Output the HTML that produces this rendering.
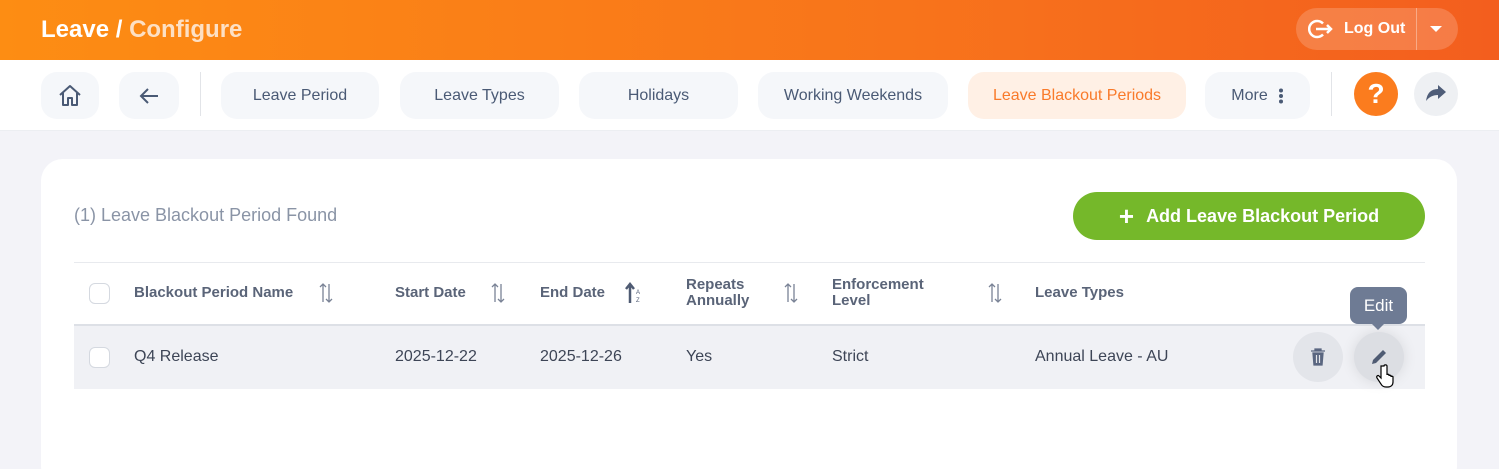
<!DOCTYPE html>
<html><head><style>
*{box-sizing:border-box;margin:0;padding:0}
html,body{width:1499px;height:469px;overflow:hidden}
body{background:#f3f3f8;font-family:"Liberation Sans",sans-serif;position:relative;color:#4a5568}
.hdr{position:absolute;left:0;top:0;width:1499px;height:60px;background:linear-gradient(90deg,#fd8d13,#f8741b 60%,#f35e1e)}
.title{position:absolute;left:41px;top:16px;font-size:24px;font-weight:bold;color:#fff}
.title span{color:#fde0c4}
.logout{position:absolute;left:1296px;top:8px;width:162px;height:42px;border-radius:21px;background:rgba(255,255,255,.18);color:#fff;font-weight:bold;font-size:16px}
.nav{position:absolute;left:0;top:60px;width:1499px;height:71px;background:#fff;border-bottom:1px solid #eceef2}
.pill{position:absolute;top:12px;height:47px;border-radius:16px;background:#f5f7fa;color:#4a5a75;font-size:16px;display:flex;align-items:center;justify-content:center}
.vd{position:absolute;top:12px;width:1px;height:44px;background:#e2e4e8}
.card{position:absolute;left:41px;top:159px;width:1416px;height:330px;background:#fff;border-radius:22px}
.found{position:absolute;left:74px;top:205px;font-size:18px;color:#8a94a6}
.add{position:absolute;left:1073px;top:192px;width:352px;height:48px;border-radius:24px;background:#75b82a;color:#fff;font-weight:bold;font-size:18px;display:flex;align-items:center;justify-content:center}
.th{position:absolute;font-size:15px;font-weight:bold;color:#5a6478;line-height:16px}
.td{position:absolute;top:348px;font-size:16px;color:#3d4556}
.cb{position:absolute;left:89px;width:21px;height:21px;border:1.5px solid #d5d9e0;border-radius:6px;background:#fff}
.sort{position:absolute;top:282px}
</style></head><body>
<div class="hdr"><div class="title">Leave / <span>Configure</span></div>
<div class="logout">
<svg style="position:absolute;left:12px;top:10px" width="26" height="22" viewBox="0 0 26 22"><path d="M15 5.5A8 8 0 1 0 15 16.5" fill="none" stroke="#fff" stroke-width="2.5"/><path d="M8 11h15M19 7l4 4-4 4" fill="none" stroke="#fff" stroke-width="2.5"/></svg>
<span style="position:absolute;left:48px;top:12px">Log Out</span>
<div style="position:absolute;left:120px;top:0;width:1px;height:42px;background:rgba(255,255,255,.35)"></div>
<div style="position:absolute;left:134px;top:18px;border-left:6px solid transparent;border-right:6px solid transparent;border-top:6px solid #fff"></div>
</div></div>
<div class="nav">
<div class="pill" style="left:41px;width:58px"><svg width="26" height="24" viewBox="0 0 26 24"><path d="M3 11L13 2l10 9M6 9v12h5v-7h4v7h5V9" fill="none" stroke="#4a5a75" stroke-width="2" stroke-linejoin="round"/></svg></div>
<div class="pill" style="left:119px;width:60px"><svg width="22" height="18" viewBox="0 0 22 18"><path d="M20 9H3M10 2L3 9l7 7" fill="none" stroke="#4a5a75" stroke-width="2"/></svg></div>
<div class="vd" style="left:200px"></div>
<div class="pill" style="left:221px;width:158px">Leave Period</div>
<div class="pill" style="left:400px;width:159px">Leave Types</div>
<div class="pill" style="left:579px;width:159px">Holidays</div>
<div class="pill" style="left:758px;width:190px">Working Weekends</div>
<div class="pill" style="left:968px;width:218px;background:#fff0e5;color:#f97a2a">Leave Blackout Periods</div>
<div class="pill" style="left:1205px;width:105px">More <svg style="margin-left:10px" width="6" height="16" viewBox="0 0 6 16"><circle cx="3" cy="2.5" r="2" fill="#4a5a75"/><circle cx="3" cy="8" r="2" fill="#4a5a75"/><circle cx="3" cy="13.5" r="2" fill="#4a5a75"/></svg></div>
<div class="vd" style="left:1331px"></div>
<div style="position:absolute;left:1354px;top:12px;width:44px;height:44px;border-radius:50%;background:#fb7c1e;color:#fff;font-weight:bold;font-size:28px;text-align:center;line-height:44px">?</div>
<div style="position:absolute;left:1414px;top:12px;width:44px;height:44px;border-radius:50%;background:#eef0f3"><svg style="position:absolute;left:10px;top:11px" width="24" height="22" viewBox="0 0 24 22"><path d="M22 9L14 2v4C7 6 3 10 2 18c3-4 7-6 12-6v4z" fill="#4f5d78"/></svg></div>
</div>
<div class="card"></div>
<div class="found">(1) Leave Blackout Period Found</div>
<div class="add"><span style="font-size:26px;margin-right:12px;font-weight:bold">+</span>Add Leave Blackout Period</div>
<div style="position:absolute;left:74px;top:262px;width:1351px;height:1px;background:#e8eaee"></div>
<div class="cb" style="top:283px"></div>
<div class="th" style="left:134px;top:285px">Blackout Period Name</div>
<svg class="sort" style="left:318px" width="16" height="22" viewBox="0 0 16 22"><path d="M5 20V2M2 5l3-3 3 3M11 2v18M8 17l3 3 3-3" fill="none" stroke="#7a8396" stroke-width="1.3"/></svg>
<div class="th" style="left:395px;top:285px">Start Date</div>
<svg class="sort" style="left:490px" width="16" height="22" viewBox="0 0 16 22"><path d="M5 20V2M2 5l3-3 3 3M11 2v18M8 17l3 3 3-3" fill="none" stroke="#7a8396" stroke-width="1.3"/></svg>
<div class="th" style="left:540px;top:285px">End Date</div>
<svg class="sort" style="left:625px" width="16" height="22" viewBox="0 0 16 22"><path d="M5 21V3M1 7l4-5 4 5" fill="none" stroke="#4f5b73" stroke-width="2.5"/><text x="11" y="12" font-size="6" fill="#4f5b73">A</text><text x="11" y="20" font-size="6" fill="#4f5b73">Z</text></svg>
<div class="th" style="left:686px;top:277px">Repeats<br>Annually</div>
<svg class="sort" style="left:783px" width="16" height="22" viewBox="0 0 16 22"><path d="M5 20V2M2 5l3-3 3 3M11 2v18M8 17l3 3 3-3" fill="none" stroke="#7a8396" stroke-width="1.3"/></svg>
<div class="th" style="left:832px;top:277px">Enforcement<br>Level</div>
<svg class="sort" style="left:987px" width="16" height="22" viewBox="0 0 16 22"><path d="M5 20V2M2 5l3-3 3 3M11 2v18M8 17l3 3 3-3" fill="none" stroke="#7a8396" stroke-width="1.3"/></svg>
<div class="th" style="left:1035px;top:285px">Leave Types</div>
<div style="position:absolute;left:74px;top:324px;width:1351px;height:65px;background:#f0f1f5;border-top:2px solid #dde0e6"></div>
<div class="cb" style="top:347px"></div>
<div class="td" style="left:134px">Q4 Release</div>
<div class="td" style="left:395px">2025-12-22</div>
<div class="td" style="left:540px">2025-12-26</div>
<div class="td" style="left:686px">Yes</div>
<div class="td" style="left:832px">Strict</div>
<div class="td" style="left:1035px">Annual Leave - AU</div>
<div style="position:absolute;left:1293px;top:332px;width:50px;height:50px;border-radius:50%;background:#e3e5ea"><svg style="position:absolute;left:17px;top:16px" width="16" height="18" viewBox="0 0 16 18"><path d="M1 3h14M5 3V1h6v2M3 5h10l-1 12H4z" fill="#5a6680" stroke="#5a6680" stroke-width="1.3"/><path d="M6.5 7v8M9.5 7v8" stroke="#e3e5ea" stroke-width="1.2"/></svg></div>
<div style="position:absolute;left:1354px;top:332px;width:50px;height:50px;border-radius:50%;background:#dcdee3;box-shadow:0 0 14px rgba(0,0,0,.1)"><svg style="position:absolute;left:16px;top:16px" width="18" height="18" viewBox="0 0 18 18"><path d="M2 16l1-4L13 2l3 3L6 15z" fill="#4f5b73"/></svg></div>
<div style="position:absolute;left:1350px;top:287px;width:57px;height:37px;border-radius:8px;background:#6e7b94;color:#fff;font-size:17px;text-align:center;line-height:37px">Edit</div>
<div style="position:absolute;left:1372px;top:324px;border-left:6px solid transparent;border-right:6px solid transparent;border-top:6px solid #6e7b94"></div>
<svg style="position:absolute;left:1376px;top:364px" width="18" height="26" viewBox="0 0 18 26"><path d="M5 2v12l-2-2c-1-1-3 0-2 2l4 6c1 2 3 3 5 3h2c3 0 5-2 5-5v-5c0-1-2-1-2 0v-1c0-1-2-1-2 0v-1c0-1-2-1-2 0V2c0-1.5-3-1.5-3 0z" fill="#fff" stroke="#000" stroke-width="1.2"/></svg>
</body></html>
